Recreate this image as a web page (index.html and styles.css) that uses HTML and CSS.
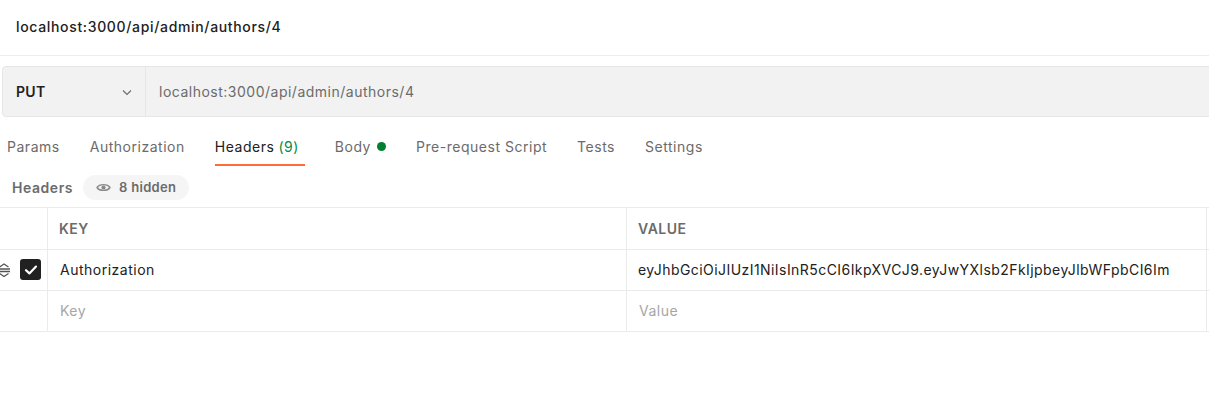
FILE: index.html
```html
<!DOCTYPE html>
<html>
<head>
<meta charset="utf-8">
<link rel="stylesheet" href="styles.css">
</head>
<body>
<div class="page">
  <div class="title">localhost:3000/api/admin/authors/4</div>
  <div class="urlbar">
    <div class="method">
      <span class="method-name">PUT</span>
      <svg class="chev" width="12" height="12" viewBox="0 0 12 12"><path d="M2 4.5 L6 8.5 L10 4.5" fill="none" stroke="#6b6b6b" stroke-width="1.1"/></svg>
    </div>
    <div class="url">localhost:3000/api/admin/authors/4</div>
  </div>
  <div class="tabs">
    <div class="tab">Params</div>
    <div class="tab">Authorization</div>
    <div class="tab active">Headers <span class="count">(9)</span></div>
    <div class="tab">Body <span class="dot"></span></div>
    <div class="tab">Pre-request Script</div>
    <div class="tab">Tests</div>
    <div class="tab">Settings</div>
  </div>
  <div class="subhead">
    <span class="sublabel">Headers</span>
    <span class="pill">
      <svg width="15" height="11" viewBox="0 0 16 12"><path d="M1 6 C3.5 1.8 12.5 1.8 15 6 C12.5 10.2 3.5 10.2 1 6 Z" fill="none" stroke="#8a8a8a" stroke-width="1.6"/><circle cx="8" cy="6" r="2.3" fill="#8a8a8a"/></svg>
      8 hidden
    </span>
  </div>
  <div class="table">
    <div class="row head">
      <div class="cell ctrl"></div>
      <div class="cell">KEY</div>
      <div class="cell">VALUE</div>
      <div class="cell extra"></div>
    </div>
    <div class="row body-row">
      <div class="cell ctrl">
        <svg class="drag" width="14" height="16" viewBox="0 0 14 16"><path d="M2.5 5 L7 2 L11.5 5" fill="none" stroke="#555" stroke-width="1.3"/><path d="M1 7 H13 M1 9.5 H13" stroke="#555" stroke-width="1.3"/><path d="M2.5 11.5 L7 14.5 L11.5 11.5" fill="none" stroke="#555" stroke-width="1.3"/></svg>
        <span class="check"><svg width="14" height="12" viewBox="0 0 14 12"><path d="M2 6.2 L5.4 9.4 L12 2.6" fill="none" stroke="#fff" stroke-width="2.2" stroke-linecap="round" stroke-linejoin="round"/></svg></span>
      </div>
      <div class="cell">Authorization</div>
      <div class="cell val">eyJhbGciOiJIUzI1NiIsInR5cCI6IkpXVCJ9.eyJwYXlsb2FkIjpbeyJlbWFpbCI6Im</div>
      <div class="cell extra"></div>
    </div>
    <div class="row body-row">
      <div class="cell ctrl"></div>
      <div class="cell ph">Key</div>
      <div class="cell ph">Value</div>
      <div class="cell extra"></div>
    </div>
  </div>
</div>
</body>
</html>
```
FILE: styles.css
```css
html, body {
  margin: 0;
  padding: 0;
  background: #fff;
  overflow: hidden;
}
body {
  font-family: Inter, "Noto Sans", sans-serif;
  color: #212121;
  width: 1209px;
  height: 404px;
}
.page {
  width: 1209px;
  overflow: hidden;
}
.title {
  height: 55px;
  border-bottom: 1px solid #ededed;
  padding-left: 16px;
  font-size: 14px;
  font-weight: 500;
  letter-spacing: 0.66px;
  line-height: 54px;
  color: #212121;
}
.urlbar {
  margin-top: 10px;
  margin-left: 2px;
  width: 1240px;
  height: 49px;
  background: #f2f2f2;
  border: 1px solid #e6e6e6;
  border-radius: 4px;
  display: flex;
  align-items: stretch;
}
.method {
  width: 143px;
  border-right: 1px solid #e6e6e6;
  display: flex;
  align-items: center;
  padding-left: 13px;
  padding-right: 12px;
  box-sizing: border-box;
  justify-content: space-between;
}
.method-name {
  font-size: 14px;
  font-weight: 600;
  letter-spacing: 0.3px;
  color: #212121;
}
.chev { margin-top: 1px; }
.url {
  display: flex;
  align-items: center;
  padding-left: 13px;
  font-size: 14px;
  letter-spacing: 0.5px;
  color: #6b6b6b;
}
.tabs {
  display: flex;
  height: 40px;
  margin-top: 10px;
  padding-left: 7px;
  gap: 30px;
}
.tab {
  font-size: 14px;
  letter-spacing: 0.52px;
  color: #6b6b6b;
  height: 39px;
  display: flex;
  align-items: center;
  gap: 4px;
  box-sizing: border-box;
  position: relative;
}
.tab.active {
  color: #212121;
  padding-right: 6px;
}
.tab.active::after {
  content: "";
  position: absolute;
  left: 0;
  right: 0;
  bottom: 0;
  height: 2px;
  background: #ff6c37;
}
.count { color: #0a8a3e; }
.dot {
  width: 9px;
  height: 9px;
  border-radius: 50%;
  background: #007f31;
  margin-left: 2px;
}
.subhead {
  display: flex;
  align-items: center;
  height: 26px;
  margin-top: 7px;
  padding-left: 12px;
  gap: 10px;
}
.sublabel {
  font-size: 14px;
  font-weight: 600;
  letter-spacing: 0.55px;
  color: #6b6b6b;
}
.pill {
  display: inline-flex;
  align-items: center;
  gap: 8px;
  height: 25px;
  padding: 0 13px 0 13px;
  background: #f5f5f5;
  border-radius: 13px;
  font-size: 13px;
  font-weight: 600;
  letter-spacing: 0.3px;
  color: #6b6b6b;
}
.table {
  margin-top: 7px;
  border-top: 1px solid #ebebeb;
  width: 1250px;
}
.row {
  display: grid;
  grid-template-columns: 48px 579px 580px 44px;
  height: 41px;
  box-sizing: border-box;
  border-bottom: 1px solid #ebebeb;
}
.row.head { height: 42px; }
.cell {
  border-right: 1px solid #ebebeb;
  display: flex;
  align-items: center;
  padding-left: 12px;
  font-size: 14px;
  letter-spacing: 0.5px;
  color: #212121;
  white-space: nowrap;
  overflow: hidden;
}
.body-row .cell { padding-bottom: 2px; }
.row.head .cell {
  font-weight: 600;
  color: #6b6b6b;
  padding-left: 11px;
}
.cell.val { padding-left: 11px; letter-spacing: 0.44px; }
.cell.ph { color: #a6a6a6; }
.cell.extra { border-right: none; }
.row.head .cell.ctrl, .cell.ctrl {
  padding-left: 0;
  position: relative;
}
.drag {
  position: absolute;
  left: -3px;
  top: 12px;
}
.check {
  position: absolute;
  left: 20px;
  top: 9px;
  width: 21px;
  height: 21px;
  background: #212121;
  border-radius: 3px;
  display: flex;
  align-items: center;
  justify-content: center;
}
```
